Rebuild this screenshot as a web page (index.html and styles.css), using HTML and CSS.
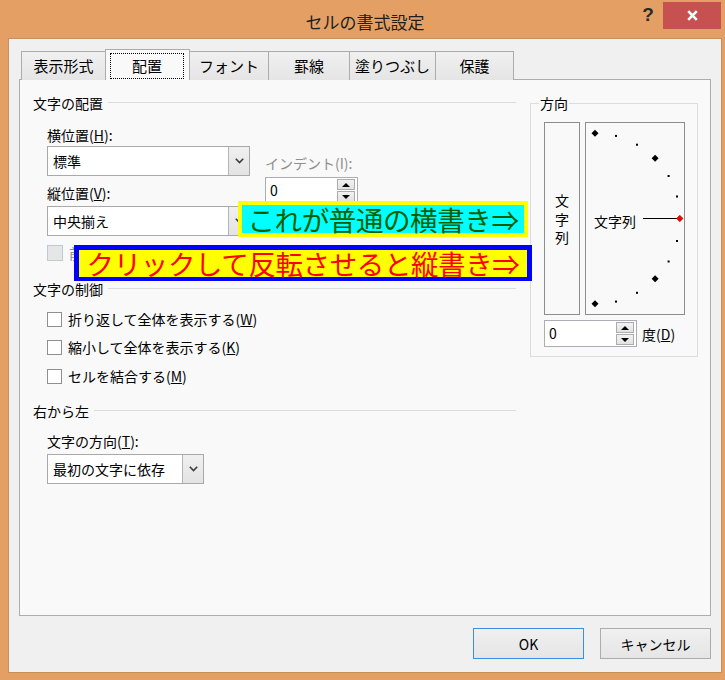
FILE: index.html
```html
<!DOCTYPE html>
<html lang="ja">
<head>
<meta charset="utf-8">
<title>セルの書式設定</title>
<link rel="stylesheet" href="styles.css">
</head>
<body>
<div class="window">
  <div class="titlebar">
    <div class="title">セルの書式設定</div>
    <div class="help">?</div>
    <div class="close"><svg width="11" height="11" viewBox="0 0 11 11"><path d="M1.2 1.2L9.8 9.8M9.8 1.2L1.2 9.8" stroke="#fff" stroke-width="2.6"/></svg></div>
  </div>
  <div class="client">
    <div class="tabs">
      <div class="tab t1">表示形式</div>
      <div class="tab t2 sel"><span class="focus">配置</span></div>
      <div class="tab t3">フォント</div>
      <div class="tab t4">罫線</div>
      <div class="tab t5">塗りつぶし</div>
      <div class="tab t6">保護</div>
    </div>
    <div class="panel">
      <div class="left">
        <div class="sec-head">文字の配置</div>
        <div class="align-body">
          <div class="col-main">
            <div class="lbl">横位置(<u>H</u>):</div>
            <div class="combo combo-wide c-first">
              <span class="combo-text">標準</span>
              <span class="combo-btn"><svg width="9" height="6" viewBox="0 0 9 6"><path d="M0.8 0.8L4.5 4.5L8.2 0.8" fill="none" stroke="#3c3c3c" stroke-width="1.6"/></svg></span>
            </div>
            <div class="lbl lbl-v">縦位置(<u>V</u>):</div>
            <div class="combo combo-wide c-second">
              <span class="combo-text">中央揃え</span>
              <span class="combo-btn"><svg width="9" height="6" viewBox="0 0 9 6"><path d="M0.8 0.8L4.5 4.5L8.2 0.8" fill="none" stroke="#3c3c3c" stroke-width="1.6"/></svg></span>
            </div>
          </div>
          <div class="col-indent">
            <div class="lbl disabled">インデント(I):</div>
            <div class="spin spin-indent">
              <span class="spin-text">0</span>
              <span class="spin-btns"><span class="sbtn"><i class="up"></i></span><span class="sbtn"><i class="down"></i></span></span>
            </div>
          </div>
        </div>
        <div class="check check-dis disabled"><span class="box"></span><span class="dis-label">前後にスペースを入れる(<u>E</u>)</span></div>

        <div class="sec-head sh2">文字の制御</div>
        <div class="check ck1"><span class="box"></span><span>折り返して全体を表示する(<u>W</u>)</span></div>
        <div class="check ck2"><span class="box"></span><span>縮小して全体を表示する(<u>K</u>)</span></div>
        <div class="check ck3"><span class="box"></span><span>セルを結合する(<u>M</u>)</span></div>

        <div class="sec-head sh3">右から左</div>
        <div class="lbl lbl-dir">文字の方向(<u>T</u>):</div>
        <div class="combo combo-dir">
          <span class="combo-text">最初の文字に依存</span>
          <span class="combo-btn"><svg width="9" height="6" viewBox="0 0 9 6"><path d="M0.8 0.8L4.5 4.5L8.2 0.8" fill="none" stroke="#3c3c3c" stroke-width="1.6"/></svg></span>
        </div>
      </div>

      <fieldset class="orient">
        <legend>方向</legend>
        <div class="orient-row">
          <div class="vbox"><span class="vtext">文字列</span></div>
          <div class="dial">
            <svg width="98" height="191" viewBox="0 0 98 191">
              <g fill="#000">
                <path d="M9 6.8L12.5 10.3L9 13.8L5.5 10.3Z"/>
                <rect x="29" y="11.9" width="2" height="2"/>
                <rect x="50" y="20.7" width="2" height="2"/>
                <path d="M69.1 31.8L72.6 35.3L69.1 38.8L65.6 35.3Z"/>
                <rect x="81.6" y="52" width="2" height="2"/>
                <rect x="90" y="72.5" width="2" height="2"/>
                <rect x="90" y="117" width="2" height="2"/>
                <rect x="81.6" y="137.5" width="2" height="2"/>
                <path d="M69.1 152.2L72.6 155.7L69.1 159.2L65.6 155.7Z"/>
                <rect x="50" y="168.8" width="2" height="2"/>
                <rect x="29" y="177.6" width="2" height="2"/>
                <path d="M9 177.2L12.5 180.7L9 184.2L5.5 180.7Z"/>
              </g>
              <text x="8" y="104" class="dial-text">文字列</text>
              <path d="M57 95.5H91" stroke="#000" stroke-width="1"/>
              <path d="M93.8 92.3L97 95.5L93.8 98.7L90.6 95.5Z" fill="#ff0000" stroke="#7a0000" stroke-width="0.6"/>
            </svg>
          </div>
        </div>
        <div class="deg-row">
          <div class="spin spin-deg">
            <span class="spin-text">0</span>
            <span class="spin-btns"><span class="sbtn"><i class="up"></i></span><span class="sbtn"><i class="down"></i></span></span>
          </div>
          <span class="lbl">度(<u>D</u>)</span>
        </div>
      </fieldset>

      <div class="callout c1">これが普通の横書き⇒</div>
      <div class="callout c2">クリックして反転させると縦書き⇒</div>
    </div>
    <div class="buttons">
      <button class="btn default">OK</button>
      <button class="btn">キャンセル</button>
    </div>
  </div>
</div>
</body>
</html>
```

FILE: styles.css
```css
* { box-sizing: border-box; }

html, body {
  margin: 0;
  padding: 0;
}

body {
  width: 725px;
  height: 680px;
  overflow: hidden;
  background: #e4a064;
  font-family: "Noto Sans CJK JP", "Noto Sans", sans-serif;
  font-size: 14px;
  color: #000;
}

.window {
  display: flex;
  flex-direction: column;
  height: 680px;
}

/* ---------- title bar ---------- */
.titlebar {
  height: 38px;
  display: flex;
  align-items: flex-start;
  flex: none;
}

.title {
  flex: 1;
  padding-left: 97px;
  text-align: center;
  font-size: 17px;
  line-height: 22px;
  margin-top: 11px;
  color: #1e1e1e;
}

.help {
  width: 30px;
  margin-top: 4px;
  text-align: center;
  font-family: "Liberation Sans", Arial, sans-serif;
  font-weight: bold;
  font-size: 19px;
  line-height: 22px;
  color: #2a2a2a;
}

.close {
  width: 58px;
  height: 27px;
  margin-top: 2px;
  margin-right: 4px;
  background: #c75050;
  display: flex;
  align-items: center;
  justify-content: center;
}

/* ---------- client ---------- */
.client {
  flex: 1;
  margin: 0 3px 7px 8px;
  background: #f0f0f0;
  border: 1px solid #c98f5a;
  padding: 10px 10px 0 10px;
  display: flex;
  flex-direction: column;
}

.tabs {
  display: flex;
  align-items: flex-end;
  height: 31px;
  padding-left: 2px;
  margin-bottom: -1px;
  position: relative;
  z-index: 2;
}

.tab {
  height: 29px;
  border: 1px solid #acacac;
  border-bottom: none;
  background: linear-gradient(#f0f0f0, #e5e5e5);
  font-size: 15px;
  line-height: 27px;
  text-align: center;
  margin-left: -1px;
  white-space: nowrap;
}

.tab.t1 { width: 85px; margin-left: 0; }
.tab.t2 { width: 85px; }
.tab.t3 { width: 80px; }
.tab.t4 { width: 82px; }
.tab.t5 { width: 87px; }
.tab.t6 { width: 79px; }

.tab.sel {
  height: 31px;
  background: #f9f9f9;
  padding: 3px 5px 1px 4px;
  display: flex;
  position: relative;
  z-index: 3;
}

.focus {
  flex: 1;
  border: 1px dotted #000;
  display: flex;
  align-items: center;
  justify-content: center;
  line-height: 20px;
  padding-bottom: 1px;
}

.panel {
  position: relative;
  height: 537px;
  flex: none;
  border: 1px solid #adadad;
  background: #f9f9f9;
  padding: 14px 11px 0 13px;
  display: flex;
  align-items: flex-start;
  gap: 14px;
}

/* ---------- left column ---------- */
.left {
  width: 483px;
  display: flex;
  flex-direction: column;
  align-items: flex-start;
}

.sec-head {
  align-self: stretch;
  display: flex;
  align-items: center;
  line-height: 18px;
  height: 18px;
  color: #000;
}

.sec-head::after {
  content: "";
  flex: 1;
  height: 1px;
  background: #dcdcdc;
  margin-left: 5px;
  margin-top: -1px;
}

.sh2 { margin-top: 18px; }
.sh3 { margin-top: 17px; }

.lbl {
  line-height: 18px;
  height: 18px;
  white-space: nowrap;
}

.disabled { color: #8f8f8f; }

.align-body {
  display: flex;
  margin-top: 14px;
  padding-left: 14px;
}

.col-main {
  display: flex;
  flex-direction: column;
}

.col-indent {
  margin-left: 15px;
  padding-top: 28px;
  display: flex;
  flex-direction: column;
}

.c-first { margin-top: 2px; }
.lbl-v { margin-top: 8px; }
.c-second { margin-top: 4px; }

.combo {
  height: 30px;
  border: 1px solid #a9a9a9;
  background: #ffffff;
  display: flex;
}

.combo-wide { width: 203px; }

.combo-text {
  flex: 1;
  padding-left: 5px;
  line-height: 28px;
  white-space: nowrap;
}

.combo-btn {
  width: 21px;
  border-left: 1px solid #b4b4b4;
  background: linear-gradient(#f0f0f0, #e3e3e3);
  display: flex;
  align-items: center;
  justify-content: center;
}

.spin {
  height: 27px;
  border: 1px solid #abadb3;
  background: #ffffff;
  display: flex;
}

.spin-indent { width: 93px; margin-top: 5px; }
.spin-deg { width: 93px; }

.spin-text {
  flex: 1;
  padding-left: 4px;
  line-height: 25px;
}

.spin-btns {
  width: 21px;
  padding: 1px 2px 1px 1px;
  display: flex;
  flex-direction: column;
  gap: 1px;
}

.sbtn {
  flex: 1;
  border: 1px solid #acacac;
  background: linear-gradient(#f2f2f2, #e2e2e2);
  display: flex;
  align-items: center;
  justify-content: center;
}

.sbtn i {
  display: block;
  width: 0;
  height: 0;
  border-left: 4px solid transparent;
  border-right: 4px solid transparent;
}

.sbtn i.up { border-bottom: 4px solid #000; }
.sbtn i.down { border-top: 4px solid #000; }

.check {
  display: flex;
  align-items: center;
  gap: 6px;
  height: 18px;
  line-height: 18px;
  margin-left: 14px;
  white-space: nowrap;
}

.check .box {
  width: 15px;
  height: 15px;
  border: 1px solid #8e8f8f;
  background: #ffffff;
  flex: none;
}

.check-dis { margin-top: 8px; }
.check-dis .box {
  width: 16px;
  height: 16px;
  border-color: #bccbd2;
  background: #e6e6e6;
}

.ck1 { margin-top: 12px; }
.ck2 { margin-top: 10px; }
.ck3 { margin-top: 11px; }

.lbl-dir { margin-top: 12px; margin-left: 14px; }

.combo-dir {
  width: 157px;
  margin-top: 4px;
  margin-left: 14px;
}

/* ---------- orientation ---------- */
.orient {
  width: 168px;
  margin: 0;
  padding: 10px 12px 9px 13px;
  border: 1px solid #dcdcdc;
  min-inline-size: 0;
}

.orient legend {
  padding: 0 1px;
  margin-left: -5px;
  line-height: 18px;
  height: 18px;
}

.orient-row {
  display: flex;
  gap: 5px;
}

.vbox {
  width: 36px;
  height: 193px;
  border: 1px solid #8d8d8d;
  background: #f9f9f9;
  display: flex;
  align-items: center;
  justify-content: center;
}

.vtext {
  writing-mode: vertical-rl;
  text-orientation: upright;
  letter-spacing: 4.5px;
  line-height: 16px;
  margin-top: 6px;
}

.dial {
  width: 100px;
  height: 193px;
  border: 1px solid #8d8d8d;
  background: #f9f9f9;
}

.dial svg { display: block; }

.dial-text {
  font-family: "Noto Sans CJK JP", sans-serif;
  font-size: 14px;
  fill: #000;
}

.deg-row {
  display: flex;
  align-items: center;
  gap: 5px;
  margin-top: 5px;
}

/* ---------- callouts ---------- */
.callout {
  position: absolute;
  font-size: 27.5px;
  white-space: nowrap;
  text-align: center;
  letter-spacing: -0.4px;
}

.c1 {
  left: 218px;
  top: 121px;
  width: 290px;
  height: 36px;
  border: 4px solid #ffff00;
  background: #00ffff;
  color: #006000;
  line-height: 28px;
}

.c2 {
  left: 54px;
  top: 165px;
  width: 458px;
  height: 36px;
  border: 5px solid #0000ff;
  border-bottom-width: 4px;
  background: #ffff00;
  color: #ff0000;
  line-height: 27px;
}

/* ---------- buttons ---------- */
.buttons {
  display: flex;
  justify-content: flex-end;
  gap: 16px;
  margin-top: 12px;
}

.btn {
  width: 111px;
  height: 31px;
  border: 1px solid #acacac;
  background: linear-gradient(#f0f0f0, #e5e5e5);
  font-family: "Noto Sans CJK JP", sans-serif;
  font-size: 14px;
  color: #000;
  padding: 0;
  margin: 0;
}

.btn.default { border-color: #3c8ee3; }
```
